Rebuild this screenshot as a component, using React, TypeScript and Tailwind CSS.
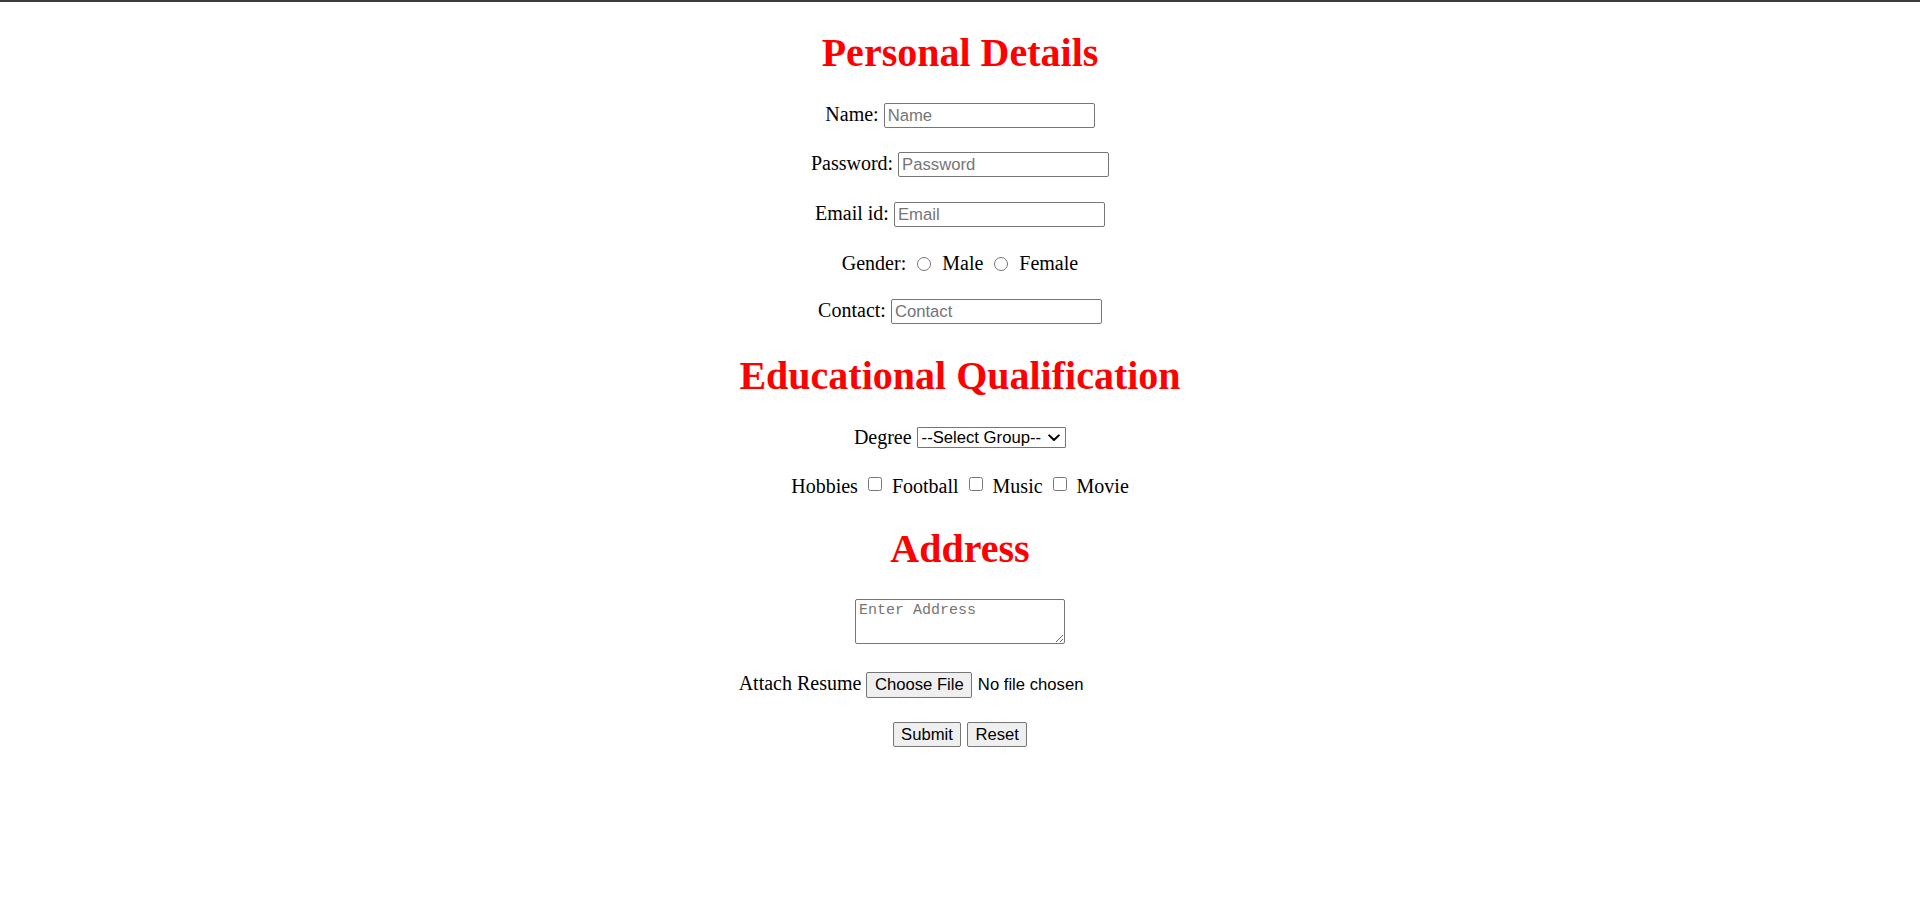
import React from "react";

const H = "font-['Liberation_Serif','Times_New_Roman',serif] font-bold text-[40px] leading-[46px] h-[46px] text-[#ff0000] whitespace-nowrap";
const INPUT = "box-border w-[211px] h-[25px] border border-[#767676] rounded-[2px] bg-white px-[3px] text-[16.67px] font-['Liberation_Sans',Arial,sans-serif] text-black placeholder:text-[#757575] outline-none";
const BTN = "box-border h-[25.5px] border border-[#767676] rounded-[2px] bg-[#efefef] px-[7.5px] text-[16.67px] leading-[19px] font-['Liberation_Sans',Arial,sans-serif] text-black whitespace-nowrap";
const RADIO = "appearance-none box-border w-[14px] h-[14px] m-0 rounded-full border border-[#767676] bg-white shrink-0";
const CHECK = "appearance-none box-border w-[14px] h-[14px] m-0 mb-[4px] rounded-[2.5px] border border-[#767676] bg-white shrink-0";
const ROW = "flex items-start justify-center gap-[5px] h-[25px] shrink-0";
const LABEL = "whitespace-nowrap leading-[22px]";

export default function App() {
  return (
    <div className="min-h-[909px] w-full bg-white text-black font-['Liberation_Serif','Times_New_Roman',serif] text-[20px] leading-[23px] flex flex-col items-center">
      <div className="h-[2px] w-full bg-[#3c3c3c] shrink-0" />

      <h1 className={`${H} mt-[27.5px]`}>Personal Details</h1>

      <div className={`${ROW} mt-[27.8px]`}>
        <label className={LABEL}>Name:</label>
        <input type="text" placeholder="Name" className={INPUT} />
      </div>
      <div className={`${ROW} mt-[24px]`}>
        <label className={LABEL}>Password:</label>
        <input type="password" placeholder="Password" className={INPUT} />
      </div>
      <div className={`${ROW} mt-[25px]`}>
        <label className={LABEL}>Email id:</label>
        <input type="email" placeholder="Email" className={INPUT} />
      </div>

      <div className="flex items-center justify-center h-[23px] shrink-0 mt-[25.2px]">
        <span className="whitespace-nowrap">Gender:</span>
        <input type="radio" name="g" className={`${RADIO} ml-[11px]`} />
        <span className="ml-[11px]">Male</span>
        <input type="radio" name="g" className={`${RADIO} ml-[11px]`} />
        <span className="ml-[11px]">Female</span>
      </div>

      <div className={`${ROW} mt-[23.8px]`}>
        <label className={LABEL}>Contact:</label>
        <input type="text" placeholder="Contact" className={INPUT} />
      </div>

      <h2 className={`${H} mt-[28.5px]`}>Educational Qualification</h2>

      <div className="flex items-center justify-center gap-[5px] h-[23px] shrink-0 mt-[27.2px]">
        <label className="whitespace-nowrap">Degree</label>
        <span className="relative inline-flex">
          <select className="appearance-none box-border w-[149.5px] h-[21.5px] border border-[#767676] rounded-[1px] bg-white pl-[4px] pr-[20px] text-[16.67px] leading-[19px] font-['Liberation_Sans',Arial,sans-serif] text-black outline-none">
            <option>--Select Group--</option>
            <option>B.Tech</option>
            <option>M.Tech</option>
          </select>
          <svg className="pointer-events-none absolute right-[6px] top-[7px]" width="12" height="8" viewBox="0 0 12 8">
            <path d="M1.2 1.4 L6 6 L10.8 1.4" fill="none" stroke="#000" strokeWidth="2" strokeLinecap="round" strokeLinejoin="round" />
          </svg>
        </span>
      </div>

      <div className="flex items-center justify-center h-[23px] shrink-0 mt-[26px]">
        <span className="whitespace-nowrap">Hobbies</span>
        <input type="checkbox" className={`${CHECK} ml-[10px]`} />
        <span className="ml-[10px]">Football</span>
        <input type="checkbox" className={`${CHECK} ml-[10px]`} />
        <span className="ml-[10px]">Music</span>
        <input type="checkbox" className={`${CHECK} ml-[10px]`} />
        <span className="ml-[10px]">Movie</span>
      </div>

      <h2 className={`${H} mt-[27.8px]`}>Address</h2>

      <textarea
        placeholder="Enter Address"
        className="box-border block shrink-0 w-[210px] h-[45px] mt-[26.9px] border border-[#767676] rounded-[2px] bg-white px-[3px] py-[2px] text-[15px] leading-[18px] font-['Liberation_Mono','Courier_New',monospace] text-black placeholder:text-[#757575] outline-none resize"
      />

      <div className={`${ROW} mt-[28.6px]`}>
        <label className={LABEL}>Attach Resume</label>
        <div className="flex items-center w-[315px] h-[25px]">
          <button type="button" className={BTN}>Choose File</button>
          <span className="ml-[5.6px] text-[16.67px] leading-[19px] font-['Liberation_Sans',Arial,sans-serif] whitespace-nowrap">No file chosen</span>
        </div>
      </div>

      <div className="flex items-center justify-center gap-[5.6px] h-[25.5px] shrink-0 mt-[24.4px]">
        <button type="submit" className={BTN}>Submit</button>
        <button type="reset" className={BTN}>Reset</button>
      </div>
    </div>
  );
}
